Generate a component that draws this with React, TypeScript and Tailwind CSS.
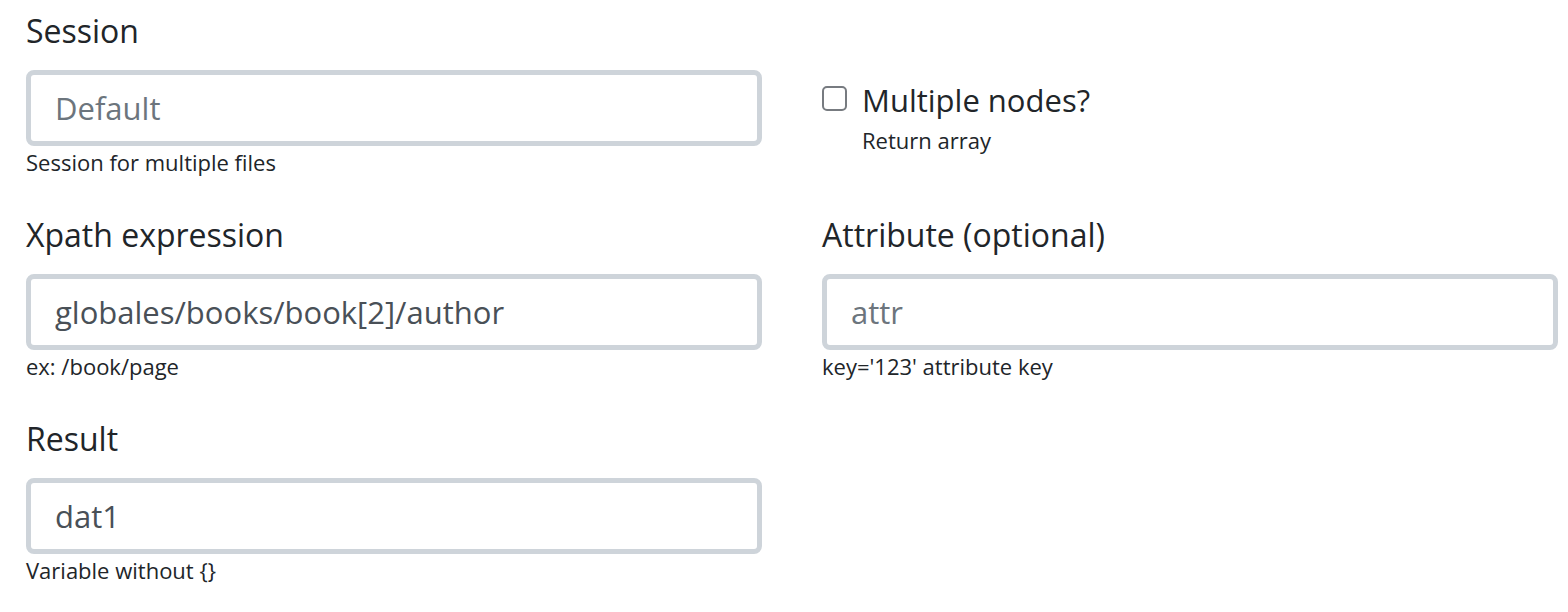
import React from "react";

const font = { fontFamily: "'Open Sans', 'Noto Sans', sans-serif" };

function Field({ label, value, placeholder, help }: { label: string; value?: string; placeholder?: string; help: string }) {
  return (
    <div className="flex flex-col mb-[35px]">
      <label className="text-[32px] leading-[48px] mb-[15px] text-[#212529]">{label}</label>
      <input
        readOnly
        defaultValue={value}
        placeholder={placeholder}
        className="h-[76px] w-full border-[5px] border-[#ced4da] rounded-[8px] px-[24px] text-[31px] text-[#495057] placeholder:text-[#6c757d] bg-white outline-none"
        style={font}
      />
      <small className="mt-[2px] text-[22px] leading-[28px] text-[#212529]">{help}</small>
    </div>
  );
}

export default function App() {
  return (
    <div className="w-[1568px] h-[612px] bg-white pl-[26px] pr-[10px] pt-[7px] overflow-hidden" style={font}>
      <div className="grid grid-cols-2 gap-x-[60px] items-start">
        <Field label="Session" placeholder="Default" help="Session for multiple files" />
        <div className="mt-[69px] flex flex-row items-start">
          <span className="mt-[10px] w-[25px] h-[25px] border-[2px] border-[#777b80] rounded-[5px] bg-white shrink-0" />
          <div className="ml-[15px] flex flex-col">
            <span className="text-[31px] leading-[48px] text-[#212529]">Multiple nodes?</span>
            <span className="mt-[2px] text-[22px] leading-[28px] text-[#212529]">Return array</span>
          </div>
        </div>
        <Field label="Xpath expression" value="globales/books/book[2]/author" help="ex: /book/page" />
        <Field label="Attribute (optional)" placeholder="attr" help="key='123' attribute key" />
        <Field label="Result" value="dat1" help="Variable without {}" />
      </div>
    </div>
  );
}
